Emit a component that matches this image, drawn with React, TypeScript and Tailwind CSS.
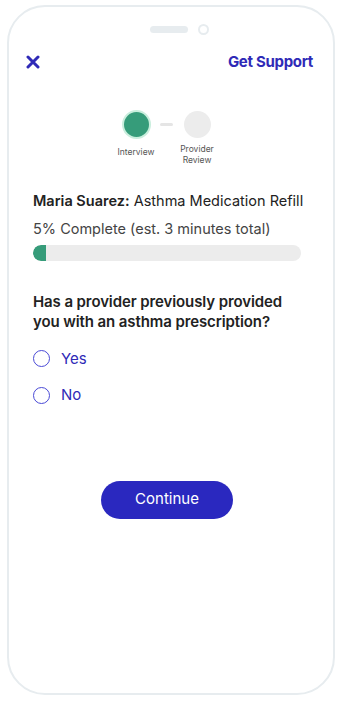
import React from 'react';

export default function App() {
  return (
    <div className="w-[342px] h-[701px] bg-white pt-[5px] px-[7px]" style={{ fontFamily: 'Inter, "Open Sans", sans-serif' }}>
      <div className="h-[690px] border-2 border-[#e7ecef] rounded-[38px] flex flex-col">
        {/* Notch */}
        <div className="flex items-center justify-center gap-[10px] pt-[17px] pl-[16px]">
          <div className="w-[38px] h-[7px] rounded-full bg-[#e7ecef]" />
          <div className="w-[11px] h-[11px] rounded-full border-2 border-[#e7ecef]" />
        </div>

        {/* Header */}
        <div className="flex items-center justify-between pl-[17px] pr-[20px] mt-[16px]">
          <svg width="14" height="14" viewBox="0 0 14 14" fill="none">
            <path d="M2 2L12 12M12 2L2 12" stroke="#2f2ab7" strokeWidth="3" strokeLinecap="round" />
          </svg>
          <span className="text-[15px] font-bold text-[#2f2ab7] tracking-[-0.3px]">Get Support</span>
        </div>

        {/* Stepper */}
        <div className="flex justify-center mt-[36px] pr-[9px]">
          <div className="flex flex-col items-center w-[48px]">
            <div className="w-[29px] h-[29px] rounded-full bg-[#369c7a] border-2 border-[#c9eedd]" />
            <span className="text-[8.5px] text-[#555] mt-[7px]">Interview</span>
          </div>
          <div className="w-[13px] h-[3px] rounded-full bg-[#e5e5e5] mt-[13px]" />
          <div className="flex flex-col items-center w-[48px]">
            <div className="w-[27px] h-[27px] mt-[1px] rounded-full bg-[#ececec]" />
            <span className="text-[8.5px] text-[#555] mt-[6px] text-center leading-[11px]">
              Provider
              <br />
              Review
            </span>
          </div>
        </div>

        {/* Content */}
        <div className="pl-[24px] pr-[10px] mt-[26px]">
          <p className="text-[14.5px] text-[#222] leading-[18px] whitespace-nowrap">
            <span className="font-semibold">Maria Suarez:</span> Asthma Medication Refill
          </p>
          <p className="text-[14.5px] text-[#444] mt-[10px] leading-[18px] whitespace-nowrap">5% Complete (est. 3 minutes total)</p>
          <div className="w-[268px] h-[16px] rounded-full bg-[#ececec] mt-[7px] overflow-hidden">
            <div className="w-[13px] h-full bg-[#369c7a] rounded-l-full" />
          </div>

          <p className="w-[270px] text-[15px] font-semibold text-[#222] leading-[20px] mt-[31px] tracking-[-0.1px]">
            Has a provider previously provided you with an asthma prescription?
          </p>

          <div className="flex flex-col gap-[14px] mt-[16px]">
            <label className="flex items-center gap-[11px]">
              <span className="w-[17px] h-[17px] rounded-full border-[1.5px] border-[#4a4ad6]" />
              <span className="text-[15px] text-[#2f2ab7]">Yes</span>
            </label>
            <label className="flex items-center gap-[11px]">
              <span className="w-[17px] h-[17px] rounded-full border-[1.5px] border-[#4a4ad6]" />
              <span className="text-[15px] text-[#2f2ab7]">No</span>
            </label>
          </div>
        </div>

        <div className="flex justify-center mt-[74px] pr-[8px]">
          <button className="w-[132px] h-[38px] rounded-full bg-[#2a28bf] text-white text-[15px]">Continue</button>
        </div>
      </div>
    </div>
  );
}
